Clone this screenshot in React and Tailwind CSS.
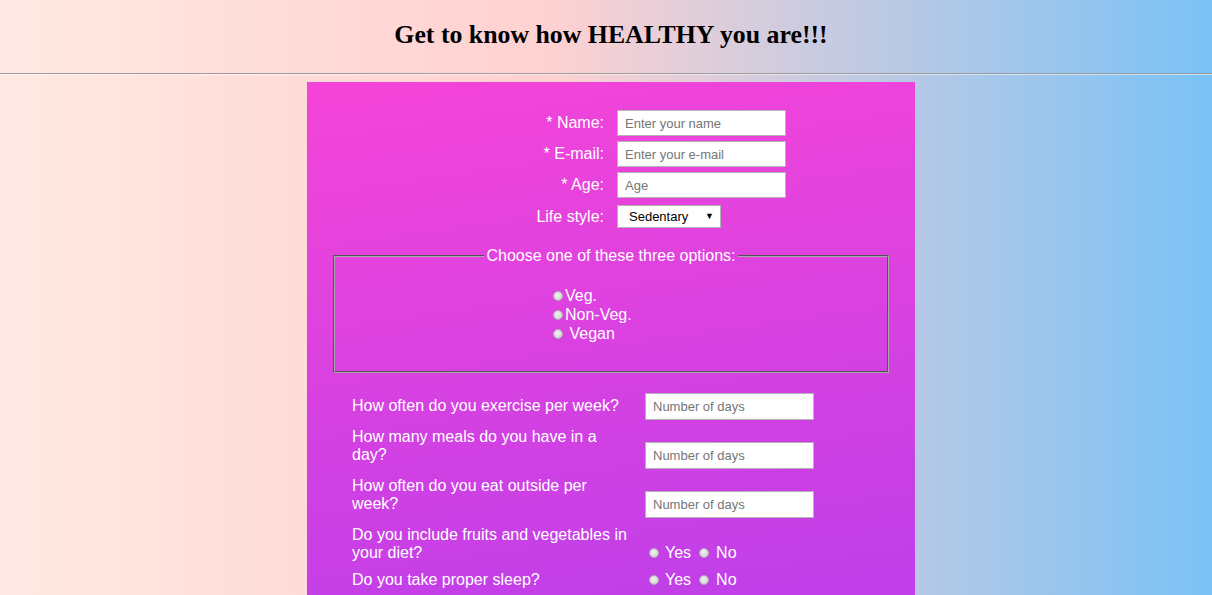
// Health quiz form — single page recreation
const radioDot =
  "inline-block w-[10px] h-[10px] rounded-full border border-[#b0b0b0] bg-[radial-gradient(circle_at_45%_40%,#f2f2f2,#c9c9c9)] shrink-0";

function TextInput({ placeholder, className = "" }) {
  return (
    <input
      type="text"
      placeholder={placeholder}
      className={
        "bg-white border border-[#b3b3b3] pl-[7px] text-[13px] text-black placeholder:text-[#767676] outline-none " +
        className
      }
    />
  );
}

function Radio({ label }) {
  return (
    <label className="flex items-center leading-[19px]">
      <span className={radioDot} />
      <span className="ml-[2px] whitespace-pre">{label}</span>
    </label>
  );
}

function YesNo() {
  return (
    <div className="flex items-center gap-[6px] leading-[18px] pl-[4px] pb-[5px]">
      <span className={radioDot} />
      <span>Yes</span>
      <span className={radioDot + " ml-[2px]"} />
      <span className="ml-[1px]">No</span>
    </div>
  );
}

function Question({ text, children, className = "" }) {
  return (
    <div className={"flex items-end gap-[13px] " + className}>
      <p className="w-[280px] leading-[18px] pb-[5px]">{text}</p>
      {children}
    </div>
  );
}

export default function App() {
  return (
    <div
      className="min-h-[595px] overflow-hidden bg-[linear-gradient(to_right,#ffe9e3,#ffd1d1_45%,#7ac2f6)]"
      style={{ fontFamily: '"Liberation Sans", Arial, sans-serif' }}
    >
      {/* Header */}
      <h1
        className="pt-[20px] pl-[10px] text-center text-[25.8px] leading-[30px] font-bold text-black"
        style={{ fontFamily: '"Liberation Serif", "Times New Roman", serif' }}
      >
        Get to know how HEALTHY you are!!!
      </h1>
      <div className="mt-[23px] h-[2px] border-t border-[#9c9c9c] border-b border-b-white/50" />

      {/* Form panel */}
      <div className="mt-[7px] ml-[307px] w-[608px] h-[700px] bg-[linear-gradient(172deg,#f544d8_0px,#c13fe8_560px)] text-white text-[16px]">
        {/* Personal details */}
        <div className="pt-[28px] grid grid-cols-[297px_auto] gap-x-[13px]">
          <span className="text-right leading-[26px]">* Name:</span>
          <TextInput placeholder="Enter your name" className="w-[169px] h-[26px]" />
          <span className="text-right leading-[26px] mt-[5px]">* E-mail:</span>
          <TextInput placeholder="Enter your e-mail" className="w-[169px] h-[26px] mt-[5px]" />
          <span className="text-right leading-[26px] mt-[5px]">* Age:</span>
          <TextInput placeholder="Age" className="w-[169px] h-[26px] mt-[5px]" />
          <span className="text-right leading-[23px] mt-[7px]">Life style:</span>
          <div className="mt-[7px] w-[104px] h-[23px] bg-white border border-[#b3b3b3] flex items-center justify-between pl-[11px] pr-[6px] text-black text-[13px]">
            <span>Sedentary</span>
            <span className="text-[9px]">▼</span>
          </div>
        </div>

        {/* Diet options */}
        <fieldset className="mt-[19px] ml-[26px] w-[556px] border-2 border-[#a8a8a8] [border-style:groove] pt-[21px] pb-[28px]">
          <legend className="mx-auto px-[2px] leading-[18px]">
            Choose one of these three options:
          </legend>
          <div className="flex flex-col pl-[218px] leading-[18.5px]">
            <Radio label="Veg." />
            <Radio label="Non-Veg." />
            <Radio label=" Vegan" />
          </div>
        </fieldset>

        {/* Habits */}
        <div className="mt-[20px] ml-[45px] flex flex-col gap-[8px]">
          <Question text="How often do you exercise per week?">
            <TextInput placeholder="Number of days" className="w-[169px] h-[27px]" />
          </Question>
          <Question text="How many meals do you have in a day?">
            <TextInput placeholder="Number of days" className="w-[169px] h-[27px]" />
          </Question>
          <Question text="How often do you eat outside per week?">
            <TextInput placeholder="Number of days" className="w-[169px] h-[27px]" />
          </Question>
          <Question text="Do you include fruits and vegetables in your diet?">
            <YesNo />
          </Question>
          <Question text="Do you take proper sleep?" className="-mt-[4px]">
            <YesNo />
          </Question>
        </div>
      </div>
    </div>
  );
}
